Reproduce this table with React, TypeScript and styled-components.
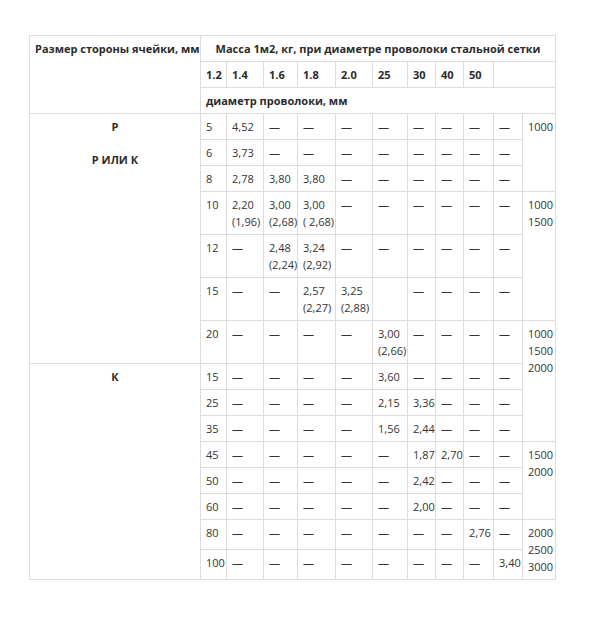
import styled, { createGlobalStyle } from 'styled-components';

const GlobalStyle = createGlobalStyle`
  body {
    margin: 0;
    background: #ffffff;
    font-family: "Open Sans", "Liberation Sans", sans-serif;
  }
`;

const Page = styled.div`
  padding: 35px 0 40px 29px;
`;

const Table = styled.table`
  width: 526px;
  table-layout: fixed;
  border-collapse: collapse;
  font-size: 11px;
  line-height: 17px;
  color: #333333;
`;

const HeadCell = styled.th<{ $center?: boolean }>`
  border: 1px solid #dcdcdc;
  padding: 4px 5px;
  text-align: ${(p) => (p.$center ? 'center' : 'left')};
  vertical-align: top;
  font-weight: 700;
  color: #2b2b2b;
  white-space: nowrap;
`;

const Cell = styled.td`
  border: 1px solid #dcdcdc;
  padding: 4px 5px;
  vertical-align: top;
  white-space: pre;
  overflow: visible;
`;

const GroupCell = styled.td`
  border: 1px solid #dcdcdc;
  padding: 4px 5px;
  vertical-align: top;
  text-align: center;
`;

const GroupLabel = styled.p`
  margin: 0 0 16px;
  font-weight: 700;
  color: #2b2b2b;
`;

const widths = [171, 26, 37, 34, 38, 37, 35, 28, 28, 30, 29, 33];
const diameters = ['1.2', '1.4', '1.6', '1.8', '2.0', '25', '30', '40', '50'];

type Width = { text: string; span: number };

type Row = {
  group?: { labels: string[]; span: number };
  cells: string[];
  width?: Width;
};

const D = '—';
const dashes = (n: number) => Array<string>(n).fill(D);

const rows: Row[] = [
  { group: { labels: ['Р', 'Р ИЛИ К'], span: 7 }, cells: ['5', '4,52', ...dashes(8)], width: { text: '1000', span: 3 } },
  { cells: ['6', '3,73', ...dashes(8)] },
  { cells: ['8', '2,78', '3,80', '3,80', ...dashes(6)] },
  { cells: ['10', '2,20\n(1,96)', '3,00\n(2,68)', '3,00\n( 2,68)', ...dashes(6)], width: { text: '1000\n1500', span: 3 } },
  { cells: ['12', D, '2,48\n(2,24)', '3,24\n(2,92)', ...dashes(6)] },
  { cells: ['15', D, D, '2,57\n(2,27)', '3,25\n(2,88)', '', ...dashes(4)] },
  { cells: ['20', D, D, D, D, '3,00\n(2,66)', ...dashes(4)], width: { text: '1000\n1500\n2000', span: 4 } },
  { group: { labels: ['К'], span: 8 }, cells: ['15', ...dashes(4), '3,60', ...dashes(4)] },
  { cells: ['25', ...dashes(4), '2,15', '3,36', ...dashes(3)] },
  { cells: ['35', ...dashes(4), '1,56', '2,44', ...dashes(3)] },
  { cells: ['45', ...dashes(5), '1,87', '2,70', ...dashes(2)], width: { text: '1500\n2000', span: 3 } },
  { cells: ['50', ...dashes(5), '2,42', ...dashes(3)] },
  { cells: ['60', ...dashes(5), '2,00', ...dashes(3)] },
  { cells: ['80', ...dashes(7), '2,76', D], width: { text: '2000\n2500\n3000', span: 2 } },
  { cells: ['100', ...dashes(8), '3,40'] },
];

const App = () => (
  <Page>
    <GlobalStyle />
    <Table>
      <colgroup>
        {widths.map((w, i) => (
          <col key={i} style={{ width: w }} />
        ))}
      </colgroup>
      <thead>
        <tr>
          <HeadCell $center rowSpan={3}>Размер стороны ячейки, мм</HeadCell>
          <HeadCell $center colSpan={11}>Масса 1м2, кг, при диаметре проволоки стальной сетки</HeadCell>
        </tr>
        <tr>
          {diameters.map((d) => (
            <HeadCell key={d}>{d}</HeadCell>
          ))}
          <HeadCell colSpan={2} />
        </tr>
        <tr>
          <HeadCell colSpan={11}>диаметр проволоки, мм</HeadCell>
        </tr>
      </thead>
      <tbody>
        {rows.map((row, r) => (
          <tr key={r}>
            {row.group && (
              <GroupCell rowSpan={row.group.span}>
                {row.group.labels.map((l) => (
                  <GroupLabel key={l}>{l}</GroupLabel>
                ))}
              </GroupCell>
            )}
            {row.cells.map((c, i) => (
              <Cell key={i}>{c}</Cell>
            ))}
            {row.width && <Cell rowSpan={row.width.span}>{row.width.text}</Cell>}
          </tr>
        ))}
      </tbody>
    </Table>
  </Page>
);

export default App;
